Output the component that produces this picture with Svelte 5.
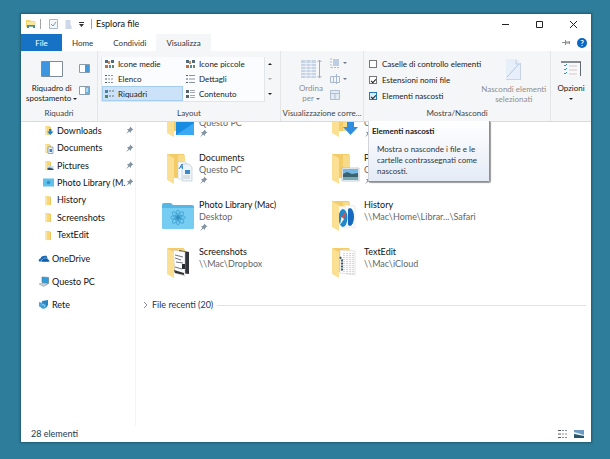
<script lang="ts">
  const tabs = ['Home', 'Condividi', 'Visualizza'];
  const layouts = [
    { name: 'Icone medie', kind: 'grid' },
    { name: 'Icone piccole', kind: 'grid' },
    { name: 'Elenco', kind: 'list' },
    { name: 'Dettagli', kind: 'lines' },
    { name: 'Riquadri', kind: 'tiles' },
    { name: 'Contenuto', kind: 'content' }
  ];
  const quick = [
    { name: 'Downloads', icon: 'down', pin: true },
    { name: 'Documents', icon: 'doc', pin: true },
    { name: 'Pictures', icon: 'pic', pin: true },
    { name: 'Photo Library (M.', icon: 'mac', pin: true },
    { name: 'History', icon: 'folder', pin: false },
    { name: 'Screenshots', icon: 'folder', pin: false },
    { name: 'TextEdit', icon: 'folder', pin: false }
  ];
  const places = [
    { name: 'OneDrive', icon: 'cloud' },
    { name: 'Questo PC', icon: 'pc' },
    { name: 'Rete', icon: 'net' }
  ];
  const tiles = [
    { name: 'Desktop', path: 'Questo PC', icon: 'desktop', pin: true },
    { name: 'Downloads', path: 'Questo PC', icon: 'down', pin: true },
    { name: 'Documents', path: 'Questo PC', icon: 'doc', pin: true },
    { name: 'Pictures', path: 'Questo PC', icon: 'pic', pin: true },
    { name: 'Photo Library (Mac)', path: 'Desktop', icon: 'mac', pin: true },
    { name: 'History', path: '\\\\Mac\\Home\\Librar...\\Safari', icon: 'history', pin: false },
    { name: 'Screenshots', path: '\\\\Mac\\Dropbox', icon: 'shots', pin: false },
    { name: 'TextEdit', path: '\\\\Mac\\iCloud', icon: 'text', pin: false }
  ];
  let selected = $state('Riquadri');
  let boxes = $state(false);
  let extensions = $state(true);
  let hidden = $state(true);
</script>

{#snippet pin()}
  <svg class="pin" width="9" height="9" viewBox="0 0 9 9">
    <path d="M5.2.6 8.3 3.7 7.3 4 6 5.400 5.800 7 4.300 5.600 1 8.300 3.400 4.700 1.900 3.200 3.700 3 5 1.700Z" fill="#8494a2" />
  </svg>
{/snippet}

{#snippet smallIcon(kind: string)}
  <svg width="12" height="11" viewBox="0 0 12 11">
    {#if kind === 'cloud'}
      <path d="M1 8.500Q0 6 2.500 5.500 3 2.500 6 3 9 1.500 9.500 5.500L4 8.500Z" fill="#1668b5" />
      <path d="M3.500 9Q2.500 6.500 5 6.300 6 4 8.300 5.300 10.500 5 10.400 6.700 12.300 7.500 11 9Z" fill="#0f5fae" stroke="#fff" stroke-width=".4" />
    {:else if kind === 'pc'}
      <path d="M4 1 10.500 1.500V7.500L4 6.500Z" fill="#2f9ddd" stroke="#5a7f99" stroke-width=".7" />
      <path d="M1 8 5 7 9.500 8.500 5.500 10.500Z" fill="#c5ced5" stroke="#8b98a3" stroke-width=".5" />
    {:else if kind === 'net'}
      <path d="M1 3 5 4V9L1 7.500Z" fill="#4aa6e0" />
      <path d="M4 2 10 1V6L8 9 4.500 7Z" fill="#2585c5" />
      <circle cx="5.500" cy="7" r="2.800" fill="#3f9dd6" />
      <path d="M3.500 6 6 5.500 7 8" stroke="#b5e0f5" fill="none" stroke-width=".7" />
    {:else if kind === 'mac'}
      <rect x="0" y="1.500" width="11" height="8" fill="#5fc0ea" />
      <circle cx="5.500" cy="5.500" r="1.800" fill="#2e94c8" />
    {:else}
      <path d="M2 1H7V10H2Z" fill="#f8d778" />
      <path d="M2 1 4 2V10.500L2 9.500Z" fill="#fbe7a5" />
      <path d="M7 2H8V10H7Z" fill="#edc55f" />
      {#if kind === 'down'}
        <path d="M6 4H8.500V6.500H10.500L7.300 10 4 6.500H6Z" fill="#247fc4" />
      {:else if kind === 'doc'}
        <path d="M5 4H10V10.500H5Z" fill="#eef3f8" stroke="#6b8eae" stroke-width=".7" />
        <path d="M6.500 6H9V9H6.500Z" fill="#4585be" />
      {:else if kind === 'pic'}
        <path d="M4 6H10.500V10H4Z" fill="#c8deec" />
        <path d="M4.500 8 7 7.500 10.500 9V10H4.500Z" fill="#39546a" />
      {/if}
    {/if}
  </svg>
{/snippet}

{#snippet largeIcon(kind: string)}
  <svg class="large" width="34" height="34" viewBox="0 0 34 34">
    {#if kind === 'mac'}
      <path d="M1 6Q1 4 3 4H10L12 6H31Q33 6 33 8V28Q33 30 31 30H3Q1 30 1 28Z" fill="#56b7e4" />
      <path d="M1 9H33V28Q33 30 31 30H3Q1 30 1 28Z" fill="#76cdf1" />
      <g fill="none" stroke="#47a7d6" stroke-width="1">
        {#each [0, 45, 90, 135] as angle}
          <ellipse cx="17" cy="18.500" rx="2.200" ry="7.500" transform={`rotate(${angle} 17 18.500)`} />
        {/each}
      </g>
      <circle cx="17" cy="18.500" r="2" fill="#328fc0" />
    {:else}
      <path d="M7 2H23V26H7Z" fill="#f3cc68" />
      <path d="M17 3H24V26H17Z" fill="#f8db8a" />
      {#if kind === 'shots'}
        <path d="M18 4 28 6V28L19 27Z" fill="#30343a" />
        <path d="M12 4 24 6V30L14 27Z" fill="#fbfcfd" stroke="#b6bdc4" stroke-width=".5" />
        <path d="M14 9 22 11M14 12 20 14M15 16 22 17M14 21 21 23" stroke="#71767b" stroke-width="1" />
        <path d="M13 24 23 27V29L14 27Z" fill="#333" />
        <path d="M21 18H24V23H21Z" fill="#292c31" />
      {:else if kind === 'text'}
        <path d="M14 4 29 5V29L14 27Z" fill="#fcfcfc" stroke="#d1d3d4" stroke-width=".6" />
        <path d="M18 7V27M21 7V28M24 7V28M27 7V28" stroke="#aeb2b7" stroke-width="1" stroke-dasharray="1 1" />
        <path d="M14 11 16 14V25" fill="none" stroke="#405767" stroke-width="2" stroke-dasharray="2 1" />
      {:else if kind === 'history'}
        <path d="M19 6 29 7V29L20 28Z" fill="#fbfbfb" stroke="#dcdedf" stroke-width=".5" />
        <ellipse cx="24" cy="18" rx="4" ry="9" fill="#1769bd" />
        <path d="M12 7 22 8V30L12 28Z" fill="#f4f9fc" />
        <ellipse cx="17" cy="19" rx="4.500" ry="9" fill="#2388c8" />
        <path d="M20 12 18 20 15.500 18Z" fill="#e44a42" />
        <path d="M14 26 18 20 15.500 18Z" fill="#fff" />
      {:else if kind === 'doc'}
        <path d="M17 10H25V27H17Z" fill="#f7fafc" stroke="#cbd5dc" stroke-width=".6" />
        <path d="M23 12H28L31 15V29H21V12Z" fill="#eef4f9" stroke="#b4c1cc" stroke-width=".6" />
        <path d="M18 17 21 12 21.500 17M19 15H22" stroke="#2e80bd" fill="none" stroke-width="1" />
        <path d="M24 18H29V22H24Z" fill="#3b8ac4" />
        <path d="M22 24H29M22 26H29" stroke="#b5c1c9" stroke-width=".8" />
      {:else if kind === 'pic'}
        <path d="M16 16H33V29H16Z" fill="#f7fafc" stroke="#a3aeb6" stroke-width=".6" />
        <path d="M17 17H32V22H17Z" fill="#75b8e3" />
        <path d="M17 22 21 20 26 22 32 21V25H17Z" fill="#3b6270" />
        <path d="M17 25H32V28H17Z" fill="#77aab5" />
      {:else if kind === 'desktop'}
        <path d="M15 13H33V30H15Z" fill="#188ce0" />
        <path d="M15 30 33 18V30Z" fill="#3aa8f2" />
      {:else if kind === 'down'}
        <path d="M21 14H28V22H32L24.500 30 17 22H21Z" fill="#2f8ee0" />
      {/if}
      <path d="M6 2 13 6V32L6 28Z" fill="#fbe093" />
      <path d="M6 2 13 6" stroke="#f2d078" stroke-width=".8" />
    {/if}
  </svg>
{/snippet}

{#snippet layoutIcon(kind: string)}
  <svg width="11" height="10" viewBox="0 0 11 10">
    {#if kind === 'grid'}
      <path d="M1 1H4V4H1ZM7 1H10V4H7Z" fill="#526979" />
      <path d="M4 2H6V5H4Z" fill="#dd8549" />
      <path d="M1 6H4V9H1Z" fill="#c66f3e" />
      <path d="M5 6H7V9H5Z" fill="#4a8dab" />
      <path d="M8 6H10V9H8Z" fill="#75845b" />
    {:else if kind === 'tiles'}
      <path d="M1 1H4V4H1Z" fill="#4c7fa4" /><path d="M1 6H4V9H1Z" fill="#4e8b59" />
      <path d="M5 2H7M8 2H10M5 7H7M8 7H10" stroke="#69747c" />
    {:else if kind === 'content'}
      <path d="M1 1H4V4H1ZM1 6H4V9H1Z" fill="#59616b" />
      <path d="M5 1.500H10M5 3.500H10M5 6.500H10M5 8.500H10" stroke="#8b939a" stroke-width=".8" />
    {:else}
      <path d="M1 1.500H3M1 5H3M1 8.500H3" stroke="#4d5d70" />
      <path d="M4 1.500H10M4 5H10M4 8.500H10" stroke="#8a949d" stroke-dasharray={kind === 'list' ? '2 1' : 'none'} />
    {/if}
  </svg>
{/snippet}

<main class="desktop">
  <div class="window">
    <header class="titlebar">
      <svg width="10" height="10" viewBox="0 0 10 10">
        <path d="M0 1H4L5 2H9V8H0Z" fill="#f3d66e" /><path d="M1 3H10V6H1Z" fill="#f9e9a0" />
        <path d="M1 9V6H9V9H7V7.500H3V9Z" fill="#3292ba" />
      </svg>
      <i class="rule"></i>
      <button class="quick" aria-label="Proprietà">
        <svg width="9" height="10" viewBox="0 0 9 10"><path d="M.5.5H8.500V9.500H.5Z" fill="#f5f8fb" stroke="#a8b7c9" /><path d="M2 5 4 7 7 3" fill="none" stroke="#6e9cc8" /></svg>
      </button>
      <button class="quick" aria-label="Nuova cartella">
        <svg width="7" height="9" viewBox="0 0 7 9"><path d="M.5 0H5.500V5L6.500 6V9H.5Z" fill="#ccd8ea" /></svg>
      </button>
      <button class="quick" aria-label="Personalizza">
        <svg width="5" height="5" viewBox="0 0 5 5"><path d="M0 0H5V1H0ZM0 2H5L2.500 5Z" fill="#333" /></svg>
      </button>
      <i class="rule"></i>
      <h1>Esplora file</h1>
      <div class="controls">
        <button aria-label="Riduci a icona"><svg width="9" height="9" viewBox="0 0 9 9"><path d="M1 4.500H8" stroke="#222" /></svg></button>
        <button aria-label="Ingrandisci"><svg width="9" height="9" viewBox="0 0 9 9"><path d="M1.500 1.500H7.500V7.500H1.500Z" fill="none" stroke="#222" /></svg></button>
        <button aria-label="Chiudi"><svg width="9" height="9" viewBox="0 0 9 9"><path d="M1 1 8 8M8 1 1 8" stroke="#222" /></svg></button>
      </div>
    </header>

    <nav class="tabs">
      <button class="file">File</button>
      {#each tabs as tab}
        <button class="tab" class:active={tab === 'Visualizza'}>{tab}</button>
      {/each}
      <div class="help">
        <button aria-label="Blocca barra multifunzione"><svg width="9" height="7" viewBox="0 0 9 7"><path d="M0 3.500H3M3.500 1V6M4 3H7M4 4H7M7.500 2V5" fill="none" stroke="#8a8d91" /></svg></button>
        <button class="question" aria-label="Guida">?</button>
      </div>
    </nav>

    <section class="ribbon">
      <div class="group panes">
        <div class="body">
          <button class="big">
            <svg width="22" height="16" viewBox="0 0 22 16"><path d="M.5.5H21.500V15.500H.5Z" fill="#fff" stroke="#7d8a97" /><path d="M1 1H9V15H1Z" fill="#3d95df" /></svg>
            <span>Riquadro di<br />spostamento <b class="arrow"></b></span>
          </button>
          <div class="stack">
            {#each ['Riquadro di anteprima', 'Riquadro dettagli'] as label, i}
              <button aria-label={label}>
                <svg width="11" height="9" viewBox="0 0 11 9"><path d="M.5.5H10.500V8.500H.5Z" fill="#fff" stroke="#8a9bab" /><path d="M6 1H10V8H6Z" fill={i ? '#6fb3dc' : '#4399de'} />{#if i}<path d="M7 3H9M7 5H9" stroke="#fff" />{/if}</svg>
              </button>
            {/each}
          </div>
        </div>
        <h2>Riquadri</h2>
      </div>

      <div class="group layout">
        <div class="body">
          <div class="gallery">
            {#each layouts as item}
              <button class:selected={selected === item.name} onclick={() => (selected = item.name)}>
                {@render layoutIcon(item.kind)}<span>{item.name}</span>
              </button>
            {/each}
          </div>
          <div class="scroller">
            <button aria-label="Su"><b class="arrow up"></b></button>
            <button aria-label="Giù" disabled><b class="arrow"></b></button>
            <button aria-label="Altro"><b class="arrow"></b></button>
          </div>
        </div>
        <h2>Layout</h2>
      </div>

      <div class="group view">
        <div class="body">
          <button class="big faded">
            <svg width="22" height="20" viewBox="0 0 22 20"><path d="M1 1H16V19H1Z" fill="#c6d4e6" /><path d="M1 4.500H16M1 7.500H16M1 10.500H16M1 13.500H16M1 16.500H16M6 1V19M11 1V19" stroke="#f5f8fb" stroke-width=".8" /><path d="M19.500 1V19M17.500 3 19.500 1 21.500 3M17.500 17 19.500 19 21.500 17" fill="none" stroke="#9aa9bd" /></svg>
            <span>Ordina<br />per <b class="arrow"></b></span>
          </button>
          <div class="stack">
            <button aria-label="Raggruppa per"><svg width="10" height="10" viewBox="0 0 10 10"><path d="M3 1H9V8H3Z" fill="#bdcde2" /><path d="M1 0V10M1 9.500H9" stroke="#afbdcf" stroke-dasharray="2 1" /></svg><b class="arrow"></b></button>
            <button aria-label="Aggiungi colonne"><svg width="10" height="10" viewBox="0 0 10 10"><path d="M.5 2.500H9.500V8.500H.5ZM3.500 2V9M6.500 0V10" fill="none" stroke="#a8b9cf" /></svg><b class="arrow"></b></button>
            <button aria-label="Adatta colonne"><svg width="10" height="10" viewBox="0 0 10 10"><path d="M.5.5H9.500V9.500H.5ZM0 3.500H10M5 3V10" fill="#e2eaf4" stroke="#b1bfd1" /></svg></button>
          </div>
        </div>
        <h2>Visualizzazione corre...</h2>
      </div>

      <div class="group show">
        <div class="body">
          <div class="checks">
            <label><input type="checkbox" bind:checked={boxes} />Caselle di controllo elementi</label>
            <label><input type="checkbox" bind:checked={extensions} />Estensioni nomi file</label>
            <label class="hot"><input type="checkbox" bind:checked={hidden} aria-describedby="tip" />Elementi nascosti</label>
          </div>
          <button class="big faded">
            <svg width="18" height="21" viewBox="0 0 18 21"><path d="M1 0H12L16 4V20H1Z" fill="#e6effa" /><path d="M1.500 20.500H15.500V4" fill="none" stroke="#a9b5c7" stroke-dasharray="1 1" /><path d="M2 18 14 5" stroke="#b4c6dd" /><path d="M11 1V5H15" fill="none" stroke="#c0cddd" /></svg>
            <span>Nascondi elementi<br />selezionati</span>
          </button>
        </div>
        <h2>Mostra/Nascondi</h2>
        <div class="tooltip" id="tip" role="tooltip">
          <strong>Elementi nascosti</strong>
          <p>Mostra o nasconde i file e le cartelle contrassegnati come nascosti.</p>
        </div>
      </div>

      <div class="group options">
        <button class="big">
          <svg width="20" height="16" viewBox="0 0 20 16"><path d="M0 1H19.500V15" fill="none" stroke="#616970" stroke-width="1.500" /><path d="M2 2H19V15H2Z" fill="#f7f8f9" /><path d="M8 5H16M8 9H16M8 13H16" stroke="#d6c9c7" /><path d="M3 4 4 5 6 3M3 8 4 9 6 7M3 12 4 13 6 11" fill="none" stroke="#378bc4" /></svg>
          <span>Opzioni<br /><b class="arrow"></b></span>
        </button>
      </div>
    </section>

    <div class="explorer">
      <aside>
        <ul class="pinned">
          {#each quick as item}
            <li><a href="#top">{@render smallIcon(item.icon)}<span>{item.name}</span></a>{#if item.pin}{@render pin()}{/if}</li>
          {/each}
        </ul>
        <ul class="places">
          {#each places as item}
            <li><a href="#top">{@render smallIcon(item.icon)}<span>{item.name}</span></a></li>
          {/each}
        </ul>
      </aside>
      <section class="content">
        <div class="tiles">
          {#each tiles as tile}
            <article>
              {@render largeIcon(tile.icon)}
              <div>
                <h3>{tile.name}</h3>
                <p>{tile.path}</p>
                {#if tile.pin}{@render pin()}{/if}
              </div>
            </article>
          {/each}
        </div>
        <button class="recent">
          <svg width="5" height="8" viewBox="0 0 5 8"><path d="M1 1 4 4 1 7" fill="none" stroke="#8b9099" /></svg>
          <span>File recenti (20)</span><i></i>
        </button>
      </section>
    </div>

    <footer>
      <span>28 elementi</span>
      <div>
        <button aria-label="Dettagli"><svg width="10" height="10" viewBox="0 0 10 10"><path d="M0 1.500H3M0 5H3M0 8.500H3" stroke="#555d66" /><path d="M4 1.500H9M4 5H9M4 8.500H9" stroke="#858b92" stroke-dasharray="2 1" /></svg></button>
        <button aria-label="Icone grandi"><svg width="10" height="8" viewBox="0 0 10 8"><path d="M0 0H10V8H0Z" fill="#6d9ac2" /><path d="M0 2 4 3 10 5V6H0Z" fill="#e2eff3" /><path d="M0 4 5 5 10 6V8H0Z" fill="#27566b" /></svg></button>
      </div>
    </footer>
  </div>
</main>

<style>
  :global(body) { background: #2e7d9b; }
  .desktop {
    box-sizing: border-box;
    display: flex;
    min-height: 100vh;
    padding: 14px 19px 17px 21px;
    background: #2e7d9b;
    font: 9px/12px Lato, "Open Sans", sans-serif;
    color: #222;
  }
  h1, h2, h3, p, ul { margin: 0; padding: 0; font: inherit; }
  ul { list-style: none; }
  svg { display: block; flex: none; }
  button {
    display: flex;
    align-items: center;
    padding: 0;
    border: 0;
    background: none;
    font: inherit;
    color: inherit;
    white-space: nowrap;
  }
  .window {
    display: flex;
    flex-direction: column;
    flex: 1;
    min-width: 0;
    background: #fff;
    box-shadow: 0 0 2px 1px #205a70;
  }
  .titlebar { display: flex; align-items: center; height: 20px; padding-left: 5px; }
  .rule { width: 1px; height: 10px; margin: 0 8px 0 4px; background: #a3a3a3; }
  .quick { margin-right: 7px; }
  .quick + .rule { margin: 0 4px 0 0; }
  h1 { color: #111; }
  .controls { display: flex; margin-left: auto; padding-right: 1px; }
  .controls button { width: 34px; height: 20px; justify-content: center; }

  .tabs, .ribbon { font-size: 8px; }
  .tabs { display: flex; height: 17px; color: #333; }
  .tabs .file { width: 41px; justify-content: center; background: #1672c5; color: #fff; }
  .tab { padding: 0 10px; }
  .tab.active { background: #f5f6f7; }
  .help { display: flex; align-items: center; gap: 6px; margin-left: auto; padding-right: 4px; }
  .question { width: 10px; height: 10px; justify-content: center; border-radius: 50%; background: #0b67c2; color: #fff; font-weight: 700; }

  .ribbon { display: flex; height: 70px; border-bottom: 1px solid #dadbdc; background: #f5f6f7; }
  .group { position: relative; display: flex; flex: none; flex-direction: column; box-sizing: border-box; border-right: 1px solid #e4e5e6; padding-top: 6px; }
  .panes { width: 77px; }
  .layout { width: 183px; }
  .view { width: 83px; }
  .show { flex: 1; min-width: 0; }
  .options { width: 40px; border: 0; align-items: center; }
  .body { display: flex; flex: 1; min-height: 0; }
  h2 { height: 14px; text-align: center; color: #444; white-space: nowrap; }
  .big { flex-direction: column; justify-content: flex-start; gap: 6px; line-height: 10px; color: #222; padding-top: 4px; }
  .panes .body { justify-content: space-between; padding: 0 7px 0 5px; }
  .stack { display: flex; flex-direction: column; gap: 6px; padding-top: 1px; }
  .stack button { gap: 3px; height: 10px; }
  .panes .stack { gap: 12px; padding-top: 6px; }
  .arrow { display: inline-block; border: 2px solid transparent; border-top-color: currentColor; border-bottom: 0; vertical-align: middle; }
  .arrow.up { border: 2px solid transparent; border-bottom-color: currentColor; border-top: 0; }
  .layout .body { padding-left: 3px; }
  .gallery { display: grid; grid-template-columns: 1fr 1fr; width: 162px; height: 44px; border: 1px solid #e3e6e9; border-width: 0 1px 1px; background: #fbfcfd; }
  .gallery button { gap: 3px; padding-left: 1px; border: 1px solid transparent; }
  .gallery .selected { background: #cbe2f8; border-color: #a5cdf0; }
  .scroller { display: flex; flex-direction: column; width: 10px; height: 44px; }
  .scroller button { flex: 1; justify-content: center; }
  .scroller button:disabled { color: #aaa; }
  .view .body { gap: 7px; padding-left: 18px; }
  .big.faded { padding-top: 2px; gap: 4px; color: #8f8f8f; }
  .view .arrow { color: #6a7686; }
  .show .body { justify-content: space-between; padding: 0 6px 0 5px; }
  .checks { display: flex; flex-direction: column; gap: 4px; padding-top: 1px; }
  label { display: flex; align-items: center; gap: 5px; height: 12px; white-space: nowrap; color: #222; }
  input { appearance: none; display: grid; place-items: center; box-sizing: border-box; width: 8px; height: 8px; margin: 0; border: 1px solid #777; background: #fff; }
  input:checked::after { content: ''; width: 4px; height: 2px; border: solid #222; border-width: 0 0 1px 1px; transform: rotate(-45deg); }
  .hot input { border-color: #247ab7; background: #d8ebf9; }
  .options .big { text-align: center; }
  .tooltip {
    position: absolute;
    z-index: 2;
    top: 100%;
    left: 4px;
    box-sizing: border-box;
    width: 122px;
    padding: 5px 5px 4px 3px;
    border: 1px solid #8a8f98;
    border-top: 0;
    border-left-color: #d0d4da;
    border-radius: 0 0 2px 2px;
    background: linear-gradient(#fff, #e4ebf6);
    box-shadow: 1px 1px 1px #999;
    line-height: 11px;
    color: #333;
  }
  .tooltip strong { color: #222; }
  .tooltip p { margin: 7px 0 0 5px; }

  .explorer { display: flex; flex: 1; }
  aside { box-sizing: border-box; width: 115px; border-right: 1px solid #f4f4f4; }
  aside li { display: flex; align-items: center; }
  aside a { display: flex; flex: 1; align-items: center; gap: 2px; min-width: 0; color: #111; text-decoration: none; }
  aside span { white-space: nowrap; }
  .pinned { display: grid; grid-auto-rows: 1fr; height: 122px; padding: 0 4px 0 22px; }
  .pinned .pin { margin-right: 0; }
  .places { padding: 3px 0 0 17px; }
  .places li { height: 23px; }
  .content { flex: 1; min-width: 0; overflow: hidden; padding: 0 5px 0 7px; }
  .tiles { display: grid; grid-template-columns: 165px 165px; grid-auto-rows: 47px; margin-top: -17px; padding-left: 18px; }
  article { display: flex; gap: 4px; white-space: nowrap; }
  h3 { color: #111; }
  article p { color: #666; }
  .recent { width: 100%; height: 12px; margin-top: 6px; gap: 4px; color: #1f3463; }
  .recent i { flex: 1; height: 1px; background: #e3e3e3; }
  footer { display: flex; align-items: center; justify-content: space-between; height: 16px; padding: 0 7px 0 10px; color: #24384f; }
  footer div { display: flex; gap: 6px; }
</style>
